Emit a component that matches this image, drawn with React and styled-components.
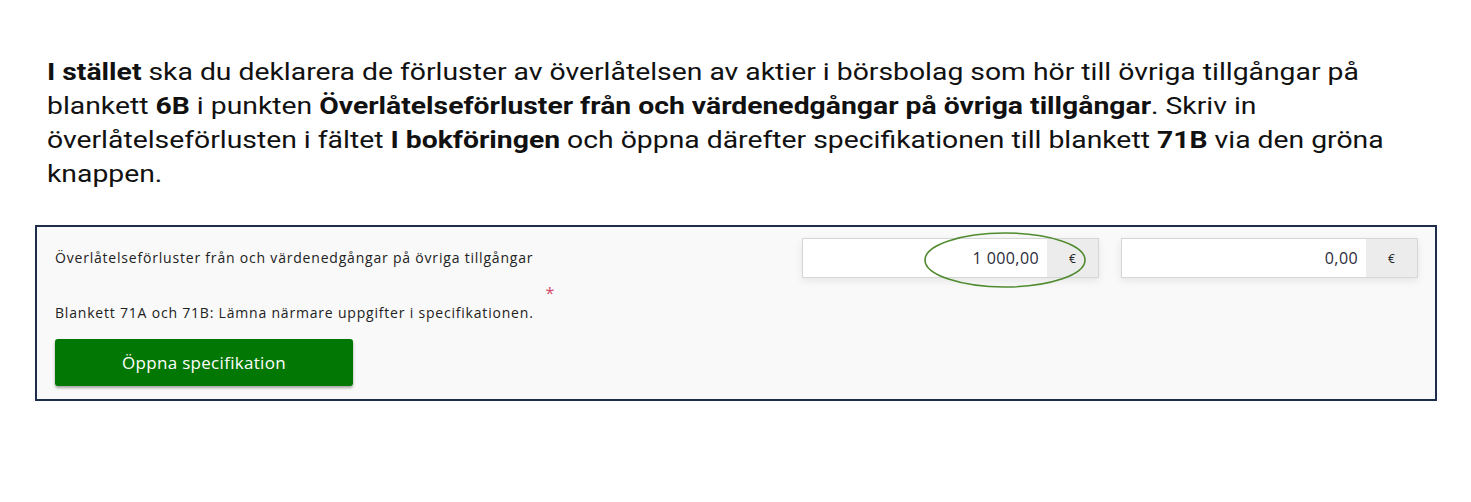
import React from 'react';
import styled, { createGlobalStyle } from 'styled-components';

const GlobalStyle = createGlobalStyle`
  body {
    margin: 0;
    background: #ffffff;
  }
`;

const Page = styled.div`
  width: 1471px;
  height: 502px;
  padding: 55px 34px 0 35px;
  box-sizing: border-box;
  overflow: hidden;
`;

const Intro = styled.p`
  width: max-content;
  margin: 0 0 34px 12px;
  font-family: Roboto, "Liberation Sans", sans-serif;
  font-size: 24px;
  line-height: 34px;
  color: #111111;
  white-space: nowrap;
  transform: scaleX(1.18);
  transform-origin: left top;
  b {
    font-weight: 700;
  }
`;

const FormBox = styled.div`
  position: relative;
  border: 2px solid #1e2d4c;
  background: #f9f9f9;
  height: 176px;
  box-sizing: border-box;
  padding: 11px 17px 0 18px;
  display: flex;
  justify-content: space-between;
`;

const LeftCol = styled.div`
  display: flex;
  flex-direction: column;
  font-family: "Open Sans", "Noto Sans", sans-serif;
  font-size: 14px;
  letter-spacing: 0.8px;
  color: #222222;
`;

const Label = styled.div`
  margin-top: 10px;
  line-height: 20px;
`;

const Hint = styled.div`
  margin-top: 34px;
  line-height: 20px;
`;

const Required = styled.span`
  color: #d44a6a;
  font-size: 16px;
  margin-left: 12px;
  position: relative;
  top: -19px;
`;

const GreenButton = styled.button`
  margin-top: 16px;
  width: 298px;
  height: 47px;
  border: none;
  border-radius: 3px;
  background: #037703;
  color: #ffffff;
  font-family: "Open Sans", "Noto Sans", sans-serif;
  font-size: 17px;
  letter-spacing: 0.3px;
  box-shadow: 0 2px 3px rgba(0, 0, 0, 0.35);
  cursor: pointer;
`;

const Inputs = styled.div`
  display: flex;
  gap: 22px;
  align-items: flex-start;
`;

const Field = styled.div`
  width: 297px;
  height: 40px;
  display: flex;
  background: #ffffff;
  border: 1px solid #d6d6d6;
  box-sizing: border-box;
  box-shadow: 0 3px 8px rgba(0, 0, 0, 0.08);
`;

const Value = styled.div`
  flex: 1;
  display: flex;
  align-items: center;
  justify-content: flex-end;
  padding-right: 8px;
  font-family: "Open Sans", "Noto Sans", sans-serif;
  font-size: 16px;
  letter-spacing: 0.4px;
  color: #2b2b3a;
`;

const Unit = styled.div`
  width: 51px;
  display: flex;
  align-items: center;
  justify-content: center;
  background: #ececec;
  font-family: "Open Sans", "Noto Sans", sans-serif;
  font-size: 12px;
  color: #222222;
`;

const Circle = styled.svg`
  position: absolute;
  left: 886px;
  top: 4px;
  pointer-events: none;
`;

const fields = [
  { id: 1, value: '1 000,00' },
  { id: 2, value: '0,00' },
];

export default function App() {
  return (
    <>
      <GlobalStyle />
      <Page>
        <Intro>
          <b>I stället</b> ska du deklarera de förluster av överlåtelsen av aktier i börsbolag som hör till övriga tillgångar på
          <br />
          blankett <b>6B</b> i punkten <b>Överlåtelseförluster från och värdenedgångar på övriga tillgångar</b>. Skriv in
          <br />
          överlåtelseförlusten i fältet <b>I bokföringen</b> och öppna därefter specifikationen till blankett <b>71B</b> via den gröna
          <br />
          knappen.
        </Intro>
        <FormBox>
          <LeftCol>
            <Label>Överlåtelseförluster från och värdenedgångar på övriga tillgångar</Label>
            <Hint>
              Blankett 71A och 71B: Lämna närmare uppgifter i specifikationen.
              <Required>*</Required>
            </Hint>
            <div>
              <GreenButton>Öppna specifikation</GreenButton>
            </div>
          </LeftCol>
          <Inputs>
            {fields.map((f) => (
              <Field key={f.id}>
                <Value>{f.value}</Value>
                <Unit>€</Unit>
              </Field>
            ))}
          </Inputs>
          <Circle width="164" height="58" viewBox="0 0 164 58">
            <ellipse cx="82" cy="29" rx="80" ry="27" fill="none" stroke="#4f8a2e" strokeWidth="1.6" />
          </Circle>
        </FormBox>
      </Page>
    </>
  );
}
